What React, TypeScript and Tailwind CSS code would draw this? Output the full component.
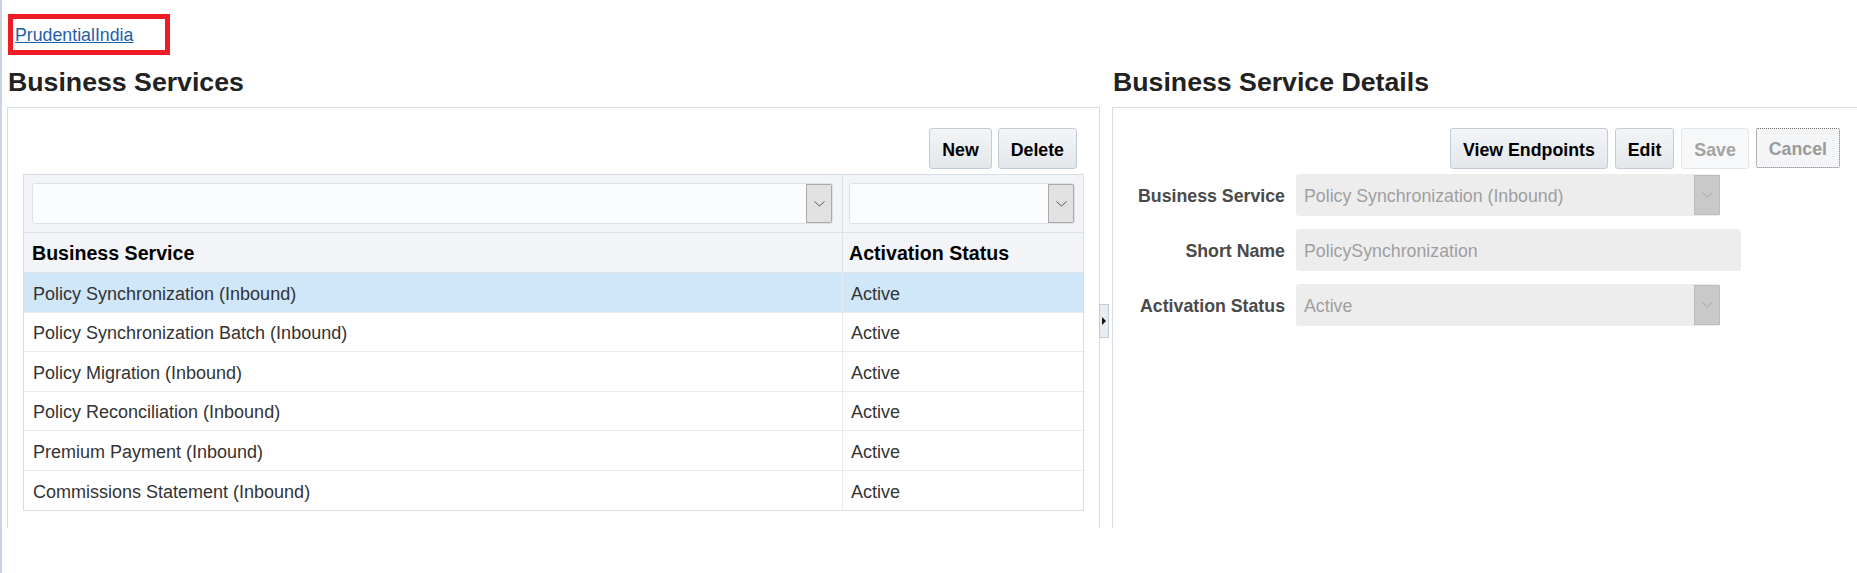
import React from 'react';

const services = [
  'Policy Synchronization (Inbound)',
  'Policy Synchronization Batch (Inbound)',
  'Policy Migration (Inbound)',
  'Policy Reconciliation (Inbound)',
  'Premium Payment (Inbound)',
  'Commissions Statement (Inbound)',
];

function Chevron({ color }: { color: string }) {
  return (
    <svg width="11" height="6" viewBox="0 0 11 6" fill="none">
      <path d="M0.5 0.5 L5.5 5 L10.5 0.5" stroke={color} strokeWidth="1" />
    </svg>
  );
}

function FilterSelect() {
  return (
    <div className="flex h-[41px] w-full overflow-hidden rounded-[3px] border border-[#dde2e8] bg-[#fbfcfd]">
      <div className="flex-1" />
      <div className="flex w-[26px] items-center justify-center border border-[#a9a9a9] bg-[#e1e1e1]">
        <Chevron color="#555" />
      </div>
    </div>
  );
}

function ToolButton({ label, disabled, focused }: { label: string; disabled?: boolean; focused?: boolean }) {
  if (disabled) {
    return (
      <button className="h-[41px] rounded-[3px] border border-[#e2e6ea] bg-[#f7f8f9] px-[12px] pt-[3px] font-bold text-[#a3a3a3]">
        {label}
      </button>
    );
  }
  if (focused) {
    return (
      <button className="h-[40px] rounded-[2px] border border-dotted border-[#6f6f6f] bg-[#f4f5f7] px-[12px] pt-[3px] font-bold text-[#9a9a9a]">
        {label}
      </button>
    );
  }
  return (
    <button className="h-[41px] rounded-[3px] border border-[#c3cbd4] bg-gradient-to-b from-[#f3f5f7] to-[#e3e7eb] px-[12px] pt-[3px] font-bold text-black">
      {label}
    </button>
  );
}

export default function App() {
  return (
    <div className="flex h-[573px] w-[1857px] overflow-hidden bg-white font-['Liberation_Sans',Arial,sans-serif] text-[17.75px]">
      <div className="w-[2px] bg-[#cbd5e2]" />
      <div className="ml-[5px] flex flex-1 flex-col">
        <div className="pl-[1px] pt-[14px]">
          <div className="h-[41px] w-[162px] border-[5px] border-[#ee1c25] pl-[2px] pt-[6px] leading-[20px]">
            <a href="#" className="text-[#1f5ea8] underline">PrudentialIndia</a>
          </div>
        </div>

        <div className="flex">
          {/* left column */}
          <div className="w-[1093px]">
            <h1 className="h-[52px] pl-[1px] pt-[11px] text-[26.7px] font-bold leading-[32px] text-[#222]">Business Services</h1>
            <div className="h-[421px] border-l border-r border-t border-[#d6dde5] px-[15px]">
              <div className="flex justify-end gap-[6px] pr-[7px] pt-[20px]">
                <ToolButton label="New" />
                <ToolButton label="Delete" />
              </div>
              <div className="mt-[5px] border border-[#d5dde5]">
                <div className="grid h-[58px] grid-cols-[818px_1fr] border-b border-[#dde3ea] bg-[#f2f4f7]">
                  <div className="flex items-center pl-[8px] pr-[9px]">
                    <FilterSelect />
                  </div>
                  <div className="flex items-center border-l border-[#dde3ea] pl-[6px] pr-[8px]">
                    <FilterSelect />
                  </div>
                </div>
                <div className="grid h-[40px] grid-cols-[818px_1fr] border-b border-[#dde3ea] bg-[#f2f4f7] text-[19.6px] font-bold text-black">
                  <div className="flex items-center pl-[8px] pt-[2px]">Business Service</div>
                  <div className="flex items-center border-l border-[#dde3ea] pl-[6px] pt-[2px]">Activation Status</div>
                </div>
                {services.map((s, i) => (
                  <div
                    key={s}
                    className={`grid h-[39.5px] grid-cols-[818px_1fr] text-[18px] text-[#333] ${
                      i < services.length - 1 ? 'border-b border-[#e6eaee]' : ''
                    } ${i === 0 ? 'bg-[#d0e6f9]' : 'bg-white'}`}
                  >
                    <div className="flex items-center pl-[9px] pt-[4px]">{s}</div>
                    <div className="flex items-center border-l border-[#e6eaee] pl-[8px] pt-[4px]">Active</div>
                  </div>
                ))}
              </div>
            </div>
          </div>

          {/* splitter */}
          <div className="w-[12px] pt-[249px]">
            <div className="-ml-[1px] flex h-[34px] w-[10px] items-center justify-center border border-[#c2cad3] bg-[#e9edf1]">
              <svg width="4" height="8" viewBox="0 0 4 8">
                <path d="M0 0 L4 4 L0 8 Z" fill="#111" />
              </svg>
            </div>
          </div>

          {/* right column */}
          <div className="flex-1">
            <h1 className="h-[52px] pl-[1px] pt-[11px] text-[26.7px] font-bold leading-[32px] text-[#222]">Business Service Details</h1>
            <div className="h-[421px] border-l border-t border-[#d6dde5] pr-[17px]">
              <div className="flex items-start justify-end gap-[7px] pt-[20px]">
                <ToolButton label="View Endpoints" />
                <ToolButton label="Edit" />
                <ToolButton label="Save" disabled />
                <ToolButton label="Cancel" focused />
              </div>
              <div className="mt-[5px] flex flex-col gap-[13px]">
                <div className="flex items-center">
                  <div className="w-[172px] pt-[2px] text-right font-bold text-[#4a4a4a]">Business Service</div>
                  <div className="ml-[11px] flex h-[42px] w-[424px] items-center rounded-[3px] bg-[#ededee] pl-[8px] text-[#9f9f9f]">
                    <span className="flex-1 pt-[2px]">Policy Synchronization (Inbound)</span>
                    <div className="flex h-[40px] w-[26px] items-center justify-center border border-[#bdbdbd] bg-[#c9c9c9]">
                      <Chevron color="#a8a8a8" />
                    </div>
                  </div>
                </div>
                <div className="flex items-center">
                  <div className="w-[172px] pt-[2px] text-right font-bold text-[#4a4a4a]">Short Name</div>
                  <div className="ml-[11px] flex h-[42px] w-[445px] items-center rounded-[3px] bg-[#ededee] pl-[8px] pt-[2px] text-[#9f9f9f]">
                    PolicySynchronization
                  </div>
                </div>
                <div className="flex items-center">
                  <div className="w-[172px] pt-[2px] text-right font-bold text-[#4a4a4a]">Activation Status</div>
                  <div className="ml-[11px] flex h-[42px] w-[424px] items-center rounded-[3px] bg-[#ededee] pl-[8px] text-[#9f9f9f]">
                    <span className="flex-1 pt-[2px]">Active</span>
                    <div className="flex h-[40px] w-[26px] items-center justify-center border border-[#bdbdbd] bg-[#c9c9c9]">
                      <Chevron color="#a8a8a8" />
                    </div>
                  </div>
                </div>
              </div>
            </div>
          </div>
        </div>
      </div>
    </div>
  );
}
